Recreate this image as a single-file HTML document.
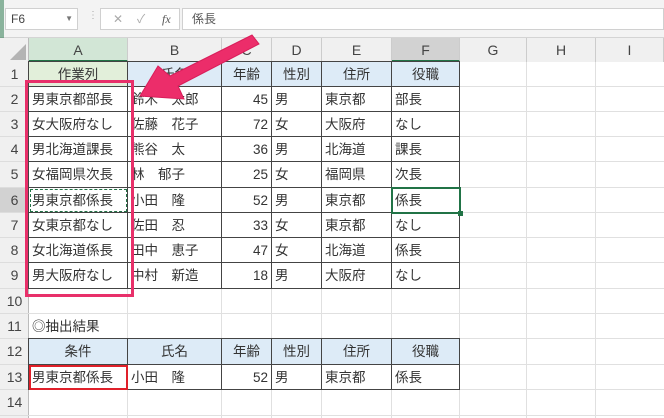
<html><head><style>
body{margin:0;width:664px;height:418px;overflow:hidden;background:#fff;font-family:"Liberation Sans","Noto Sans CJK JP",sans-serif;position:relative;color:#333}
.a{position:absolute;box-sizing:border-box}
.c{position:absolute;box-sizing:border-box;font-size:13.5px;line-height:25px;white-space:nowrap;padding:0 3px}
</style></head><body>
<div class="a" style="left:0;top:0;width:664px;height:38px;background:#f3f3f3;border-bottom:1px solid #d4d4d4"></div>
<div class="a" style="left:0;top:0;width:4px;height:418px;background:#217346;opacity:.5"></div>
<div class="a" style="left:5px;top:8px;width:73px;height:22px;background:#fff;border:1px solid #d0d0d0;font-size:12px;line-height:20px;padding-left:5px;color:#444">F6<span style="position:absolute;right:4px;top:0;font-size:8px;color:#777">▼</span></div>
<div class="a" style="left:88px;top:10px;color:#aaa;font-size:10px">⋮</div>
<div class="a" style="left:100px;top:8px;width:80px;height:22px;background:#fff;border:1px solid #d0d0d0;font-size:12px;line-height:20px;color:#aaa"><span style="position:absolute;left:12px">✕</span><span style="position:absolute;left:36px">✓</span><span style="position:absolute;left:61px;font-style:italic;font-family:'Liberation Serif';color:#555">fx</span></div>
<div class="a" style="left:182px;top:8px;width:482px;height:22px;background:#fff;border:1px solid #d0d0d0;font-size:12px;line-height:20px;padding-left:9px;color:#555">係長</div>
<div id="g"></div>
<script>
var cx=[0,29,128,222,272,322,392,460,527,596,664];
var ry=[38,62,87,112,137,162,188,213,238,263,289,314,339,365,390,416];
var h='';
var cols=['','A','B','C','D','E','F','G','H','I'];
// header row
h+='<div class="a" style="left:0;top:38px;width:664px;height:24px;background:#f0f0f0;border-bottom:1px solid #bbb"></div>';
h+='<div class="a" style="left:0;top:38px;width:29px;height:380px;background:#f0f0f0;border-right:1px solid #bbb"></div>';
h+='<div class="a" style="left:10px;top:44px;width:0;height:0;border-left:16px solid transparent;border-bottom:16px solid #b4b4b4"></div>';
for(var i=1;i<10;i++){var bg=i==1?'#d2e6d6':(i==6?'#d2d2d2':'#f0f0f0');
h+='<div class="a" style="left:'+cx[i]+'px;top:38px;width:'+(cx[i+1]-cx[i])+'px;height:24px;background:'+bg+';border-right:1px solid #ccc;text-align:center;font-size:14px;line-height:24px;color:#444;'+(i==1||i==6?'border-bottom:2px solid #217346;':'')+'">'+cols[i]+'</div>';}
for(var r=1;r<15;r++){h+='<div class="a" style="left:0;top:'+ry[r]+'px;width:29px;height:'+(ry[r+1]-ry[r])+'px;text-align:center;font-size:14px;line-height:25px;color:#444;border-bottom:1px solid #ddd;'+(r==6?'background:#d2d2d2;':'')+'">'+r+'</div>';}
// grid lines
for(var i=2;i<10;i++)h+='<div class="a" style="left:'+(cx[i]-1)+'px;top:62px;width:1px;height:356px;background:#e0e0e0"></div>';
for(var r=2;r<16;r++)h+='<div class="a" style="left:29px;top:'+(ry[r]-1)+'px;width:635px;height:1px;background:#e0e0e0"></div>';
var d=[['作業列','氏名','年齢','性別','住所','役職'],
['男東京都部長','鈴木　太郎','45','男','東京都','部長'],
['女大阪府なし','佐藤　花子','72','女','大阪府','なし'],
['男北海道課長','熊谷　太','36','男','北海道','課長'],
['女福岡県次長','林　郁子','25','女','福岡県','次長'],
['男東京都係長','小田　隆','52','男','東京都','係長'],
['女東京都なし','佐田　忍','33','女','東京都','なし'],
['女北海道係長','田中　恵子','47','女','北海道','係長'],
['男大阪府なし','中村　新造','18','男','大阪府','なし']];
function row(r,vals,hdr){for(var j=0;j<6;j++){var x=cx[j+1],w=cx[j+2]-x,y=ry[r],hh=ry[r+1]-y;
var bg=hdr?(j==0&&r==1?'#e2efda':'#ddebf7'):'#fff';
var al=hdr?'center':(j==2?'right':'left');
h+='<div class="c" style="left:'+(x-1)+'px;top:'+(y-1)+'px;width:'+(w+1)+'px;height:'+(hh+1)+'px;background:'+bg+';border:1px solid #444;text-align:'+al+'">'+vals[j]+'</div>';}}
row(1,d[0],1);for(var r=2;r<10;r++)row(r,d[r-1],0);
h+='<div class="c" style="left:29px;top:314px">◎抽出結果</div>';
row(12,['条件','氏名','年齢','性別','住所','役職'],1);
row(13,['男東京都係長','小田　隆','52','男','東京都','係長'],0);
document.getElementById('g').innerHTML=h;
</script>
<div class="a" style="left:30px;top:189px;width:97px;height:23px;border:1.5px dashed #217346"></div>
<div class="a" style="left:391px;top:187px;width:70px;height:27px;border:2px solid #217346"></div>
<div class="a" style="left:458px;top:211px;width:5px;height:5px;background:#217346"></div>
<div class="a" style="left:29px;top:365px;width:99px;height:25px;border:2px solid #e0202a"></div>
<div class="a" style="left:25px;top:80px;width:109px;height:217px;border:3px solid #e8306a"></div>
<svg class="a" style="left:0;top:0" width="664" height="418"><polygon points="140,96 158,66 170,76 252,35 259,44 178,86 184,99" fill="#ec2d6a" stroke="#d81e5a" stroke-width="1"/></svg>
</body></html>
